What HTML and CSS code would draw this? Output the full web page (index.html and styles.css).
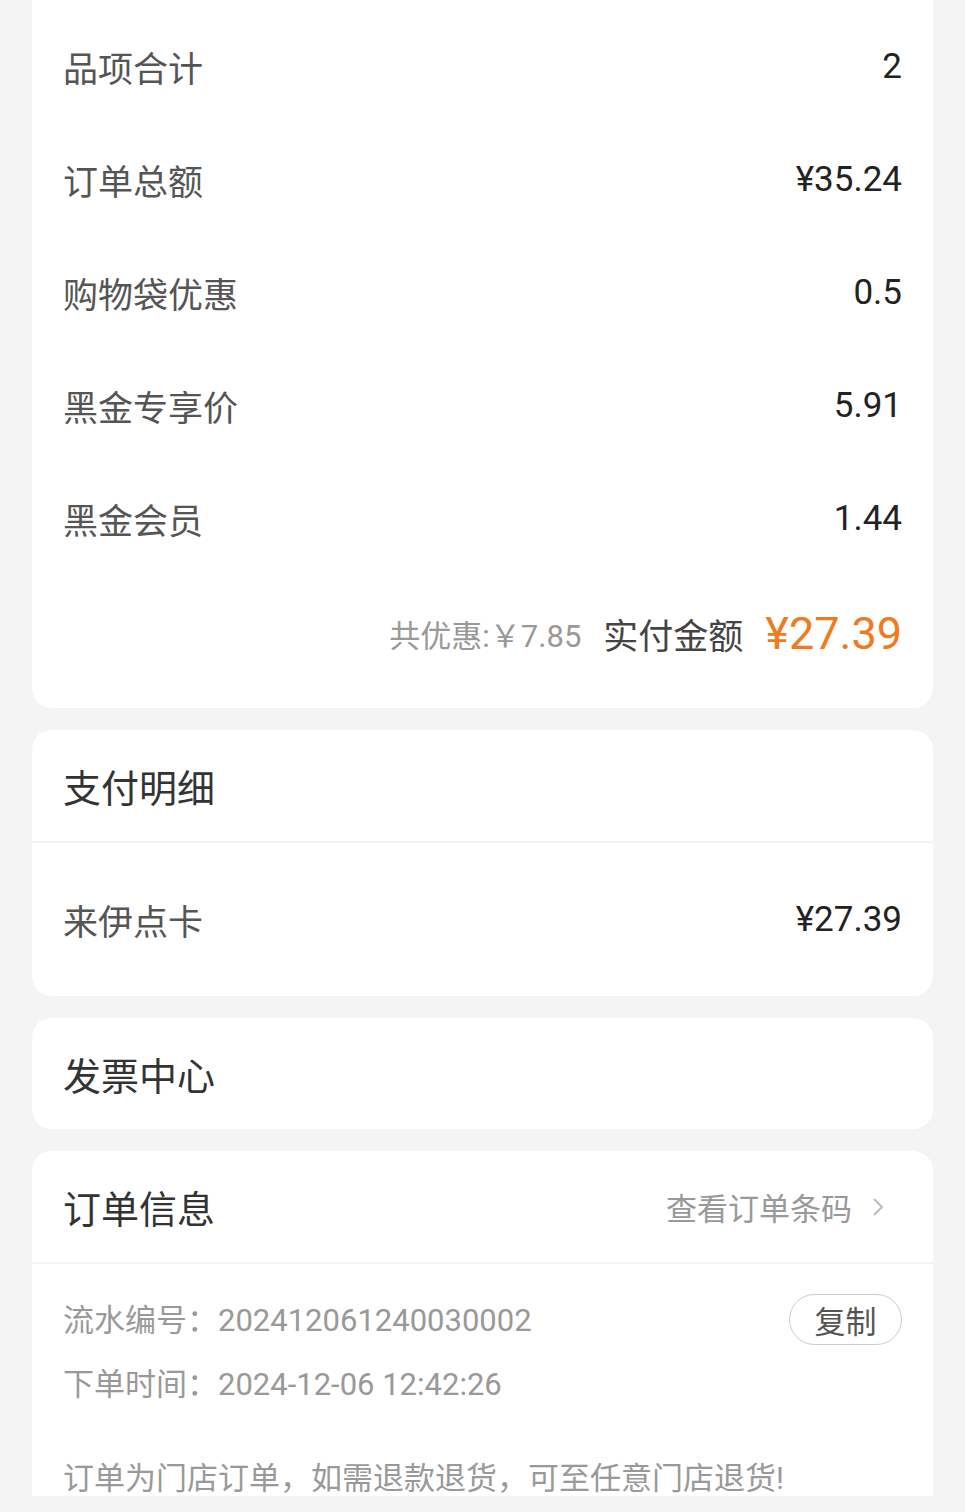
FILE: index.html
```html
<!DOCTYPE html>
<html lang="zh-CN">
<head>
<meta charset="UTF-8">
<meta name="viewport" content="width=device-width, initial-scale=1.0">
<title>订单详情</title>
<link rel="stylesheet" href="styles.css">
</head>
<body>
    <div class="page">
        <div class="card card-top">
            <div class="row"><span class="label">品项合计</span><span class="value">2</span></div>
            <div class="row"><span class="label">订单总额</span><span class="value">¥35.24</span></div>
            <div class="row"><span class="label">购物袋优惠</span><span class="value">0.5</span></div>
            <div class="row"><span class="label">黑金专享价</span><span class="value">5.91</span></div>
            <div class="row"><span class="label">黑金会员</span><span class="value">1.44</span></div>
            <div class="total">
                <span class="saved">共优惠:￥7.85</span>
                <span class="paid-label">实付金额</span>
                <span class="paid">¥27.39</span>
            </div>
        </div>

        <div class="card">
            <div class="card-head"><span class="title">支付明细</span></div>
            <div class="row row-pay"><span class="label">来伊点卡</span><span class="value">¥27.39</span></div>
        </div>

        <div class="card">
            <div class="card-head no-line"><span class="title">发票中心</span></div>
        </div>

        <div class="card card-last">
            <div class="card-head">
                <span class="title">订单信息</span>
                <span class="link">查看订单条码
                    <svg class="chev" width="12" height="20" viewBox="0 0 12 20"><path d="M2 2 L10 10 L2 18" fill="none" stroke="#bbb" stroke-width="2"/></svg>
                </span>
            </div>
            <div class="info">
                <div class="info-line">
                    <span>流水编号：202412061240030002</span>
                    <span class="copy-btn">复制</span>
                </div>
                <div class="info-line">
                    <span>下单时间：2024-12-06 12:42:26</span>
                </div>
                <div class="notice">订单为门店订单，如需退款退货，可至任意门店退货!</div>
            </div>
        </div>
    </div>
</body>
</html>
```

FILE: styles.css
```css
body {
    margin: 0;
    background-color: #f4f4f4;
    font-family: Roboto, "Noto Sans CJK SC", sans-serif;
}
.page {
    display: flex;
    flex-direction: column;
    gap: 22px;
    padding: 0 32px 15px;
}
.card {
    background-color: #fff;
    border-radius: 20px;
}
.card-top {
    border-radius: 0 0 20px 20px;
    padding: 10px 31px 17px;
}
.row {
    height: 113px;
    display: flex;
    justify-content: space-between;
    align-items: center;
}
.label {
    font-size: 35px;
    color: #555;
}
.value {
    font-size: 35px;
    color: #222;
}
.total {
    height: 116px;
    display: flex;
    justify-content: flex-end;
    align-items: center;
    gap: 22px;
}
.saved {
    font-size: 31px;
    color: #999;
}
.paid-label {
    font-size: 35px;
    color: #444;
}
.paid {
    font-size: 45px;
    color: #f07a1e;
}
.card-head {
    height: 111px;
    padding: 0 31px;
    display: flex;
    justify-content: space-between;
    align-items: center;
    border-bottom: 2px solid #f3f3f3;
}
.card-head.no-line {
    border-bottom: none;
}
.title {
    font-size: 38px;
    color: #333;
}
.row-pay {
    height: 153px;
    padding: 0 31px;
}
.link {
    font-size: 31px;
    color: #999;
    display: flex;
    align-items: center;
    gap: 20px;
    padding-right: 18px;
}
.card-last {
    border-radius: 20px 20px 0 0;
}
.info {
    padding: 21px 31px 0;
    color: #999;
    font-size: 31px;
}
.info-line {
    height: 64px;
    display: flex;
    justify-content: space-between;
    align-items: center;
}
.copy-btn {
    width: 111px;
    height: 49px;
    margin-top: 4px;
    border: 1px solid #ccc;
    border-radius: 26px;
    display: flex;
    justify-content: center;
    align-items: center;
    color: #555;
    font-size: 31px;
}
.notice {
    margin-top: 41px;
    height: 42px;
    display: flex;
    align-items: center;
}
```
